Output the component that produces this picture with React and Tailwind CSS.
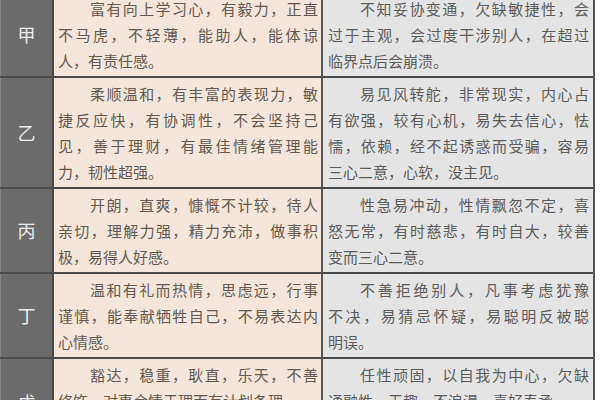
import React from 'react'

const rows = [
  {
    label: '甲',
    good: ['富有向上学习心，有毅力，正直', '不马虎，不轻薄，能助人，能体谅', '人，有责任感。'],
    bad: ['不知妥协变通，欠缺敏捷性，会', '过于主观，会过度干涉别人，在超过', '临界点后会崩溃。'],
  },
  {
    label: '乙',
    good: ['柔顺温和，有丰富的表现力，敏', '捷反应快，有协调性，不会坚持己', '见，善于理财，有最佳情绪管理能', '力，韧性超强。'],
    bad: ['易见风转舵，非常现实，内心占', '有欲强，较有心机，易失去信心，怯', '懦，依赖，经不起诱惑而受骗，容易', '三心二意，心软，没主见。'],
  },
  {
    label: '丙',
    good: ['开朗，直爽，慷慨不计较，待人', '亲切，理解力强，精力充沛，做事积', '极，易得人好感。'],
    bad: ['性急易冲动，性情飘忽不定，喜', '怒无常，有时慈悲，有时自大，较善', '变而三心二意。'],
  },
  {
    label: '丁',
    good: ['温和有礼而热情，思虑远，行事', '谨慎，能奉献牺牲自己，不易表达内', '心情感。'],
    bad: ['不善拒绝别人，凡事考虑犹豫', '不决，易猜忌怀疑，易聪明反被聪', '明误。'],
  },
  {
    label: '戊',
    good: ['豁达，稳重，耿直，乐天，不善', '修饰，对事合情于理而有计划条理'],
    bad: ['任性顽固，以自我为中心，欠缺', '通融性，无趣，不浪漫，喜好奉承，'],
    last: true,
  },
]

// each visual line is its own block so the breaks match the picture
function Para({ lines, last }) {
  return (
    <div>
      {lines.map((line, i) => {
        const full = i < lines.length - 1 || last
        return (
          <div
            key={i}
            className={
              'whitespace-nowrap leading-[26px] ' +
              (i === 0 ? 'pl-[32px] ' : '') +
              (full ? 'text-justify [text-align-last:justify]' : 'text-left')
            }
          >
            {line}
          </div>
        )
      })}
    </div>
  )
}

export default function App() {
  return (
    <div
      className="w-[600px] h-[400px] overflow-hidden bg-white"
      style={{ fontFamily: '"Noto Sans CJK SC", "Noto Sans", sans-serif' }}
    >
      <div className="-mt-[7px] w-[595px] border-r-2 border-[#555]">
        {rows.map((row) => (
          <div
            key={row.label}
            className={
              'grid grid-cols-[54px_269px_1fr] ' +
              (row.last ? 'min-h-[120px]' : 'border-b-2 border-[#4a4a4a]')
            }
          >
            <div
              className={
                'flex justify-center border-r-2 border-l border-l-[#858585] border-r-[#4a4a4a] bg-[#6b6b6b] text-[18px] text-[#ececec] ' +
                (row.last ? 'items-start pt-[30px]' : 'items-center')
              }
            >
              {row.label}
            </div>
            <div className="border-r-2 border-[#555] bg-[#f4e6da] pl-[4px] pr-[3px] pt-[3px] pb-[2px] text-[15px] text-[#625a52]">
              <Para lines={row.good} />
            </div>
            <div className="bg-[#e4e4e4] pl-[5px] pr-[4px] pt-[3px] pb-[2px] text-[15px] text-[#5c5c5c]">
              <Para lines={row.bad} />
            </div>
          </div>
        ))}
      </div>
    </div>
  )
}
